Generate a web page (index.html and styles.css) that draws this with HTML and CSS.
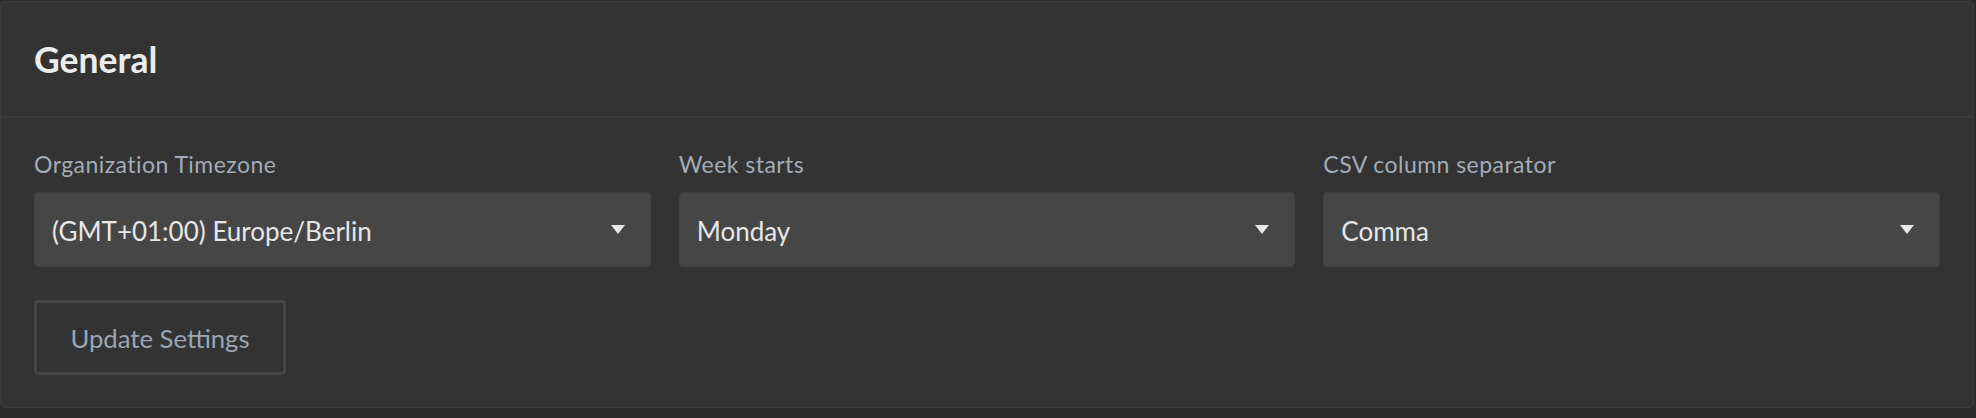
FILE: index.html
```html
<!DOCTYPE html>
<html lang="en">
<head>
<meta charset="utf-8">
<title>General settings</title>
<link rel="stylesheet" href="styles.css">
</head>
<body>
  <section class="card">
    <header class="card-header">
      <h2 class="card-title">General</h2>
    </header>
    <div class="card-body">
      <div class="fields">
        <div class="field">
          <label class="field-label">Organization Timezone</label>
          <div class="select">
            <span class="select-value">(GMT+01:00) Europe/Berlin</span>
            <svg class="select-arrow" width="16" height="11" viewBox="0 0 16 11"><path d="M1 1 H15 L8 10 Z" fill="#e8e8e8"/></svg>
          </div>
        </div>
        <div class="field">
          <label class="field-label">Week starts</label>
          <div class="select">
            <span class="select-value">Monday</span>
            <svg class="select-arrow" width="16" height="11" viewBox="0 0 16 11"><path d="M1 1 H15 L8 10 Z" fill="#e8e8e8"/></svg>
          </div>
        </div>
        <div class="field">
          <label class="field-label">CSV column separator</label>
          <div class="select">
            <span class="select-value">Comma</span>
            <svg class="select-arrow" width="16" height="11" viewBox="0 0 16 11"><path d="M1 1 H15 L8 10 Z" fill="#e8e8e8"/></svg>
          </div>
        </div>
      </div>
      <button class="btn" type="button">Update Settings</button>
    </div>
  </section>
</body>
</html>
```
FILE: styles.css
```css
* { box-sizing: border-box; }
html, body { margin: 0; }
body {
  background: #2b2b2b;
  padding: 1px 2px 10px 0;
  font-family: Lato, "Open Sans", sans-serif;
}
.card {
  background: #333333;
  border: 1px solid #3d3d3d;
  border-radius: 5px;
  height: 407px;
}
.card-header {
  height: 116px;
  border-bottom: 2px solid #3b3b3b;
  display: flex;
  align-items: center;
  padding: 0 33px 0;
}
.card-title {
  margin: 0;
  font-size: 35.5px;
  font-weight: 700;
  color: #ececec;
}
.card-body {
  padding: 33px 33px 0;
}
.fields {
  display: grid;
  grid-template-columns: repeat(3, 1fr);
  column-gap: 28px;
}
.field {
  display: flex;
  flex-direction: column;
}
.field-label {
  font-size: 23px;
  letter-spacing: 0.45px;
  line-height: 26px;
  color: #a3acb6;
  margin-bottom: 15px;
}
.select {
  height: 75px;
  background: #464646;
  border: 1px solid #404040;
  border-radius: 4px;
  display: flex;
  align-items: center;
  justify-content: space-between;
  padding: 0 24px 0 17px;
}
.select-value {
  font-size: 26px;
  color: #e6e6e6;
  padding-top: 2px;
}
.select-arrow { display: block; }
.btn {
  margin-top: 33px;
  width: 252px;
  height: 75px;
  background: transparent;
  border: 3px solid #454545;
  border-radius: 4px;
  font-family: inherit;
  font-size: 25.7px;
  color: #9aa6b3;
  padding: 0;
}
```
